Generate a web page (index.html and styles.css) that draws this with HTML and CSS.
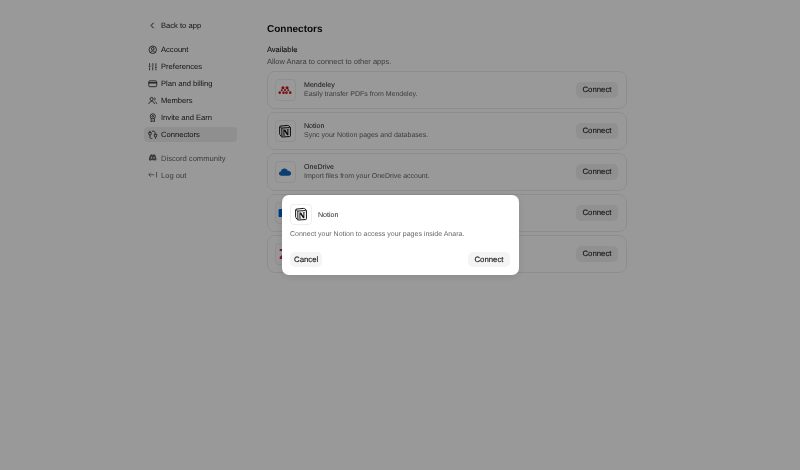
FILE: index.html
```html
<!DOCTYPE html>
<html lang="en">
<head>
<meta charset="utf-8">
<title>Connectors</title>
<link rel="stylesheet" href="styles.css">
</head>
<body>
<svg class="defs" width="0" height="0" aria-hidden="true">
  <symbol id="notion" viewBox="0 0 24 24">
    <path d="M4.200 3.600 16.600 2.400c.7 0 1 .1 1.400.4l2.800 2c.4.3.5.5.5.9v14.400c0 .9-.3 1.300-1.200 1.400L7.200 22.300c-.6 0-1-.1-1.300-.6l-2.600-3.400c-.4-.5-.5-.8-.5-1.300V4.900c0-.7.3-1.200 1.400-1.300Z" fill="#fff" stroke="#111" stroke-width="1.700" stroke-linejoin="round"/>
    <path d="M3.400 4.400 6.400 7l13.800-.9M6.600 7v14.600" fill="none" stroke="#111" stroke-width="1.700"/>
    <path d="M9.300 9.400h3l3.700 6.200V10l-1.200-.2v-.8l4-.2v.9l-1 .2v9.200l-2.300.2-4.500-7v6.300l1.400.3v.8l-4.100.2v-.9l1-.2v-8.800l-1-.2Z" fill="#111"/>
  </symbol>
</svg>
<div class="page">
  <nav class="side">
    <a class="back"><svg class="chev" viewBox="0 0 10 10"><path d="M6.200 2 3.400 5l2.800 3"/></svg>Back to app</a>
    <ul class="menu">
      <li class="item"><svg class="ico" viewBox="0 0 12 12"><circle cx="6" cy="6" r="4.700"/><circle cx="6" cy="4.800" r="1.700"/><path d="M3 9.600c.6-1.400 1.700-2 3-2s2.400.6 3 2"/></svg>Account</li>
      <li class="item"><svg class="ico" viewBox="0 0 12 12"><path d="M2 1.500v3M2 7v3.500M6 1.500v1.500M6 5.500v5M10 1.500v4.500M10 8.500v2M.8 5.500h2.400M4.800 4h2.400M8.800 7.200h2.400"/></svg>Preferences</li>
      <li class="item"><svg class="ico" viewBox="0 0 12 12"><rect x="1" y="2.300" width="10" height="7.400" rx="1.300"/><path d="M1 4.800h10" stroke-width="1.600"/></svg>Plan and billing</li>
      <li class="item"><svg class="ico" viewBox="0 0 12 12"><circle cx="4.600" cy="3.800" r="2"/><path d="M1 10c.2-2 1.700-3 3.600-3s3.400 1 3.600 3M8 2c1.200.3 1.500 3 0 3.500M9.300 7.300c1 .4 1.500 1.300 1.700 2.500"/></svg>Members</li>
      <li class="item"><svg class="ico" viewBox="0 0 12 12"><circle cx="6" cy="4.200" r="3.200"/><circle cx="6" cy="4.200" r="1.100"/><path d="M3.900 7v4l2.100-1 2.100 1V7"/></svg>Invite and Earn</li>
      <li class="item active"><svg class="ico" viewBox="0 0 12 12"><path d="M2.500 1v2M1 3h3v2c0 1-.7 1.500-1.500 1.500S1 6 1 5ZM2.500 6.500V9c0 1.200.8 2 2 2h1M5 1.500h2c1.200 0 2 .8 2 2v1.500M9.500 11V9M8 5.500h3v2c0 1-.7 1.500-1.500 1.500S8 8.500 8 7.500Z"/></svg>Connectors</li>
    </ul>
    <ul class="menu muted">
      <li class="item"><svg class="ico solid" viewBox="0 0 12 12"><path d="M3.200 2.200c.9-.4 1.500-.5 1.800-.5l.3.500h1.400l.3-.5c.3 0 1 .1 1.800.5 1.200 1.700 1.800 3.900 1.900 6.500-.8.700-1.700 1-2.300 1.100l-.6-1c-.8.3-2.800.3-3.600 0l-.6 1C2.800 9.700 1.900 9.400 1.100 8.700c.1-2.600.7-4.800 2.100-6.500Z"/><circle class="eye" cx="4.400" cy="6" r=".9"/><circle class="eye" cx="7.600" cy="6" r=".9"/></svg>Discord community</li>
      <li class="item"><svg class="ico" viewBox="0 0 12 12"><path d="M8 6H1M3.500 3.500 1 6l2.500 2.500M10.800 2.500v7"/></svg>Log out</li>
    </ul>
  </nav>
  <main class="content">
    <h1 class="title">Connectors</h1>
    <h2 class="sub">Available</h2>
    <p class="lead">Allow Anara to connect to other apps.</p>
    <div class="cards">
      <section class="card">
        <span class="logo"><svg viewBox="0 0 24 24"><g fill="#c8161d"><circle cx="8.500" cy="8" r="2.600"/><circle cx="15.500" cy="8" r="2.600"/><circle cx="12" cy="12" r="1.800"/><circle cx="6.500" cy="12.500" r="1.800"/><circle cx="17.500" cy="12.500" r="1.800"/><circle cx="3" cy="16.500" r="2.200"/><circle cx="9.500" cy="16.500" r="2.200"/><circle cx="14.500" cy="16.500" r="2.200"/><circle cx="21" cy="16.500" r="2.200"/></g></svg></span>
        <div class="info"><h3 class="name">Mendeley</h3><p class="desc">Easily transfer PDFs from Mendeley.</p></div>
        <button class="connect">Connect</button>
      </section>
      <section class="card">
        <span class="logo"><svg><use href="#notion"/></svg></span>
        <div class="info"><h3 class="name">Notion</h3><p class="desc">Sync your Notion pages and databases.</p></div>
        <button class="connect">Connect</button>
      </section>
      <section class="card">
        <span class="logo"><svg viewBox="0 0 24 24"><path d="M6 18.500c-2.700 0-4.500-1.700-4.500-3.800 0-2 1.500-3.500 3.400-3.700C5.500 8 8.200 6 11 6c2.600 0 4.700 1.500 5.500 3.900 3.400-.2 6 2 6 4.700 0 2.200-1.800 3.900-4 3.900Z" fill="#0f6cbd"/></svg></span>
        <div class="info"><h3 class="name">OneDrive</h3><p class="desc">Import files from your OneDrive account.</p></div>
        <button class="connect">Connect</button>
      </section>
      <section class="card">
        <span class="logo"><svg viewBox="0 0 24 24"><rect x="1" y="5" width="22" height="14" rx="2" fill="#0061d5"/></svg></span>
        <div class="info"><h3 class="name">Box</h3><p class="desc">Import files from your Box account.</p></div>
        <button class="connect">Connect</button>
      </section>
      <section class="card">
        <span class="logo"><svg viewBox="0 0 24 24"><path d="M3 3.500h18V7L9.500 17H21v3.500H3V17L14.500 7H3Z" fill="#cc2936"/></svg></span>
        <div class="info"><h3 class="name">Zotero</h3><p class="desc">Easily transfer PDFs from Zotero.</p></div>
        <button class="connect">Connect</button>
      </section>
    </div>
  </main>
</div>
<div class="overlay">
  <div class="modal">
    <div class="modal-head">
      <span class="logo modal-logo"><svg><use href="#notion"/></svg></span>
      <span class="modal-name">Notion</span>
    </div>
    <p class="modal-text">Connect your Notion to access your pages inside Anara.</p>
    <div class="modal-actions">
      <button class="btn btn-cancel">Cancel</button>
      <button class="btn">Connect</button>
    </div>
  </div>
</div>
</body>
</html>
```

FILE: styles.css
```css
* { box-sizing: border-box; }
html, body { margin: 0; height: 100%; }
body {
  background: #fff;
  color: #1c1c1c;
  font-family: "Liberation Sans", Arial, sans-serif;
  font-size: 7.6px;
  text-rendering: geometricPrecision;
  overflow: hidden;
  filter: blur(.2px);
}
h1, h2, h3, p, ul { margin: 0; padding: 0; }
ul { list-style: none; }
.defs { position: absolute; }

.page {
  display: flex;
  padding: 18px 0 0 144px;
  gap: 30px;
}

.side { width: 93px; flex: none; }
.back {
  display: flex;
  align-items: center;
  height: 15px;
  padding-left: 3.5px;
  gap: 4.5px;
  margin-bottom: 9px;
}
.chev { width: 9px; height: 9px; fill: none; stroke: #222; stroke-width: 1.1; }
.menu { display: flex; flex-direction: column; gap: 2px; margin-bottom: 8.5px; }
.muted { color: #666; }
.item {
  display: flex;
  align-items: center;
  height: 15px;
  padding-left: 4px;
  gap: 3.5px;
  border-radius: 4px;
  white-space: nowrap;
}
.active { background: #eee; }
.ico { width: 9.5px; height: 9.5px; flex: none; fill: none; stroke: currentColor; stroke-width: 1; }
.solid { fill: currentColor; stroke: none; }
.eye { fill: #fff; }

.content { width: 359.5px; flex: none; }
.title { font-size: 10px; font-weight: 700; line-height: 15px; margin: 3.5px 0 7.5px; color: #111; }
.sub { font-size: 7.5px; font-weight: 400; line-height: 12px; -webkit-text-stroke: .1px currentColor; }
.lead { font-size: 7.5px; line-height: 12px; margin-bottom: 3px; color: #666; }

.cards { display: flex; flex-direction: column; gap: 3.5px; }
.card {
  display: flex;
  align-items: center;
  height: 37.5px;
  padding: 0 8px 0 6.5px;
  border: 1px solid #ececec;
  border-radius: 8px;
  gap: 8px;
}
.logo {
  display: flex;
  align-items: center;
  justify-content: center;
  width: 21.5px;
  height: 21.5px;
  flex: none;
  border: 1px solid #eee;
  border-radius: 4px;
  background: #fff;
}
.logo svg { width: 14px; height: 14px; }
.info { flex: 1; min-width: 0; padding-top: .5px; }
.name { font-size: 7.1px; font-weight: 400; line-height: 10.5px; }
.desc { font-size: 7px; line-height: 10.5px; color: #666; }
.connect, .btn {
  font: 400 7.8px "Liberation Sans", Arial, sans-serif;
  text-rendering: geometricPrecision;
  -webkit-text-stroke: .1px currentColor;
  color: #1c1c1c;
  border: 0;
  background: #f1f1f1;
  height: 15.5px;
  padding: 0 6px;
  border-radius: 5px;
}
.btn { -webkit-text-stroke: .15px currentColor; background: #f4f4f4; padding: 0 6.5px; }
.btn-cancel { padding: 0 4px; }

.overlay {
  position: fixed;
  inset: 0;
  background: rgba(0, 0, 0, .4);
}
.modal {
  position: absolute;
  left: 281.5px;
  top: 195px;
  width: 237px;
  height: 80px;
  padding: 8.5px;
  background: #fff;
  border-radius: 7px;
  box-shadow: 0 2px 8px rgba(0, 0, 0, .1);
}
.modal-head { display: flex; align-items: center; gap: 6.5px; }
.modal-name { font-size: 7.1px; padding-top: .5px; }
.modal-text { margin-top: 4px; font-size: 7px; line-height: 12px; color: #666; white-space: nowrap; }
.modal-actions { display: flex; justify-content: space-between; margin-top: 10.5px; }
```
